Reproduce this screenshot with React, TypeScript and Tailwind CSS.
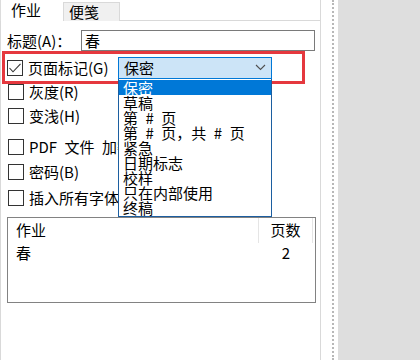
import React from 'react';

const FONT = { fontFamily: '"Noto Sans CJK SC", "Noto Sans", sans-serif' };

// en spaces stand in for the wide half-width spaces of the original dialog font
const markOptions = [
  '保密',
  '草稿',
  '第\u2002#\u2002页',
  '第\u2002#\u2002页，共\u2002#\u2002页',
  '紧急',
  '日期标志',
  '校样',
  '只在内部使用',
  '终稿',
];

function Box({ checked }: { checked?: boolean }) {
  return (
    <span className="w-[16px] h-[16px] border border-[#333333] bg-white flex items-center justify-center shrink-0">
      {checked && (
        <svg width="14" height="14" viewBox="0 0 14 14">
          <path d="M1.5 7 L5 10.8 L12.5 2.8" fill="none" stroke="#333333" strokeWidth="1.1" />
        </svg>
      )}
    </span>
  );
}

function CheckRow({ label, className }: { label: string; className?: string }) {
  return (
    <div className={`h-[16px] flex items-center pl-[7px] gap-[5px] ${className ?? ''}`}>
      <Box />
      <span className="text-[15px] leading-[16px] text-black whitespace-nowrap">{label}</span>
    </div>
  );
}

export default function App() {
  return (
    <div className="w-[420px] h-[360px] flex bg-white overflow-hidden" style={FONT}>
      {/* dialog side */}
      <div className="w-[321px] flex flex-col shrink-0">
        {/* tabs */}
        <div className="h-[21px] flex items-end shrink-0">
          <div className="w-[63px] h-[21px] pl-[10px] border-l border-[#dcdcdc] text-[15px] leading-[19px] text-black bg-white">
            作业
          </div>
          <div className="w-[57px] h-[19px] pl-[5px] bg-[#f0f0f0] border border-b-0 border-[#d9d9d9] text-[15px] leading-[18px] text-black">
            便笺
          </div>
          <div className="flex-1 h-[21px] border-b border-r border-[#d9d9d9]" />
        </div>

        {/* tab page */}
        <div className="flex-1 flex flex-col border-l border-r border-[#d9d9d9] relative">
          <div className="mt-[9px] h-[21px] flex items-center">
            <span className="w-[80px] pl-[6px] text-[15px] leading-[21px] text-black whitespace-nowrap">标题(A)：</span>
            <div className="w-[234px] h-[21px] border border-[#7a7a7a] pl-[3px] text-[15px] leading-[19px] text-black">
              春
            </div>
          </div>

          {/* highlighted row */}
          <div className="ml-[1px] w-[303px] h-[33px] border-[3px] border-[#e5383e] flex items-center relative z-10">
            <div className="pl-[2px] flex items-center gap-[5px]">
              <Box checked />
              <span className="w-[90px] text-[15px] leading-[16px] text-black whitespace-nowrap">页面标记(G)</span>
            </div>
            <div className="relative">
              <div className="w-[154px] h-[22px] bg-[#cce4f7] border border-[#0078d7] flex items-center pl-[5px] pr-[5px]">
                <span className="flex-1 text-[15px] leading-[18px] text-black">保密</span>
                <svg width="11" height="7" viewBox="0 0 11 7">
                  <path d="M1 1 L5.5 5.5 L10 1" fill="none" stroke="#505050" strokeWidth="1.1" />
                </svg>
              </div>
              {/* open list */}
              <div className="absolute left-0 top-[22px] w-[154px] bg-white border border-t-0 border-[#1c5ea0] py-[1px]">
                {markOptions.map((o, i) => (
                  <div
                    key={o}
                    className={`h-[15px] pl-[4px] text-[15px] leading-[15px] whitespace-nowrap ${
                      i === 0 ? 'bg-[#0078d7] text-white' : 'text-black'
                    }`}
                  >
                    {o}
                  </div>
                ))}
              </div>
            </div>
          </div>

          <CheckRow label="灰度(R)" className="mt-0" />
          <CheckRow label="变浅(H)" className="mt-[8px]" />
          <CheckRow label={'PDF\u2002文件\u2002加密'} className="mt-[15px]" />
          <CheckRow label="密码(B)" className="mt-[9px]" />
          <CheckRow label="插入所有字体" className="mt-[10px]" />

          {/* job list */}
          <div className="mt-[11px] ml-[6px] w-[309px] h-[86px] border border-[#828282] flex flex-col">
            <div className="h-[25px] flex items-center">
              <span className="w-[251px] h-full pl-[8px] flex items-center text-[15px] text-black border-r border-[#e5e5e5]">
                作业
              </span>
              <span className="w-[54px] h-full flex items-center justify-center text-[15px] text-black border-r border-[#e5e5e5]">
                页数
              </span>
            </div>
            <div className="h-[20px] flex items-center">
              <span className="w-[251px] pl-[8px] text-[15px] leading-[20px] text-black">春</span>
              <span className="w-[54px] text-center text-[15px] leading-[20px] text-black">2</span>
            </div>
          </div>
        </div>
      </div>

      {/* separator */}
      <div className="w-[11px] shrink-0" />
      <div className="w-0 h-full border-l-2 border-dotted border-[#b8b8b8] shrink-0" />
      <div className="w-[4px] shrink-0" />
      <div className="flex-1 bg-[#dedede]" />
    </div>
  );
}
